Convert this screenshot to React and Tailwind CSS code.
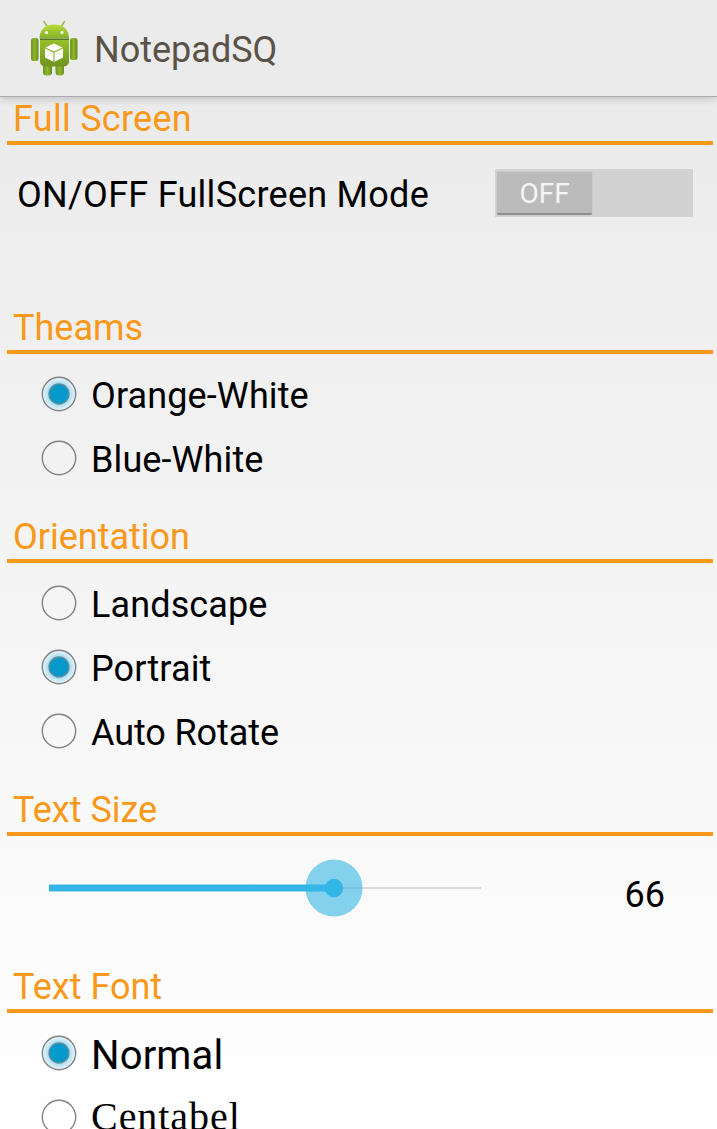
import React from "react";

function AndroidIcon() {
  return (
    <svg width="50" height="58" viewBox="0 0 50 58" className="shrink-0">
      <defs>
        <linearGradient id="head" x1="0" y1="0" x2="0" y2="1">
          <stop offset="0" stopColor="#b6dc3c" />
          <stop offset="1" stopColor="#85ae28" />
        </linearGradient>
        <linearGradient id="body" x1="0" y1="0" x2="0" y2="1">
          <stop offset="0" stopColor="#98c02c" />
          <stop offset="1" stopColor="#6e9420" />
        </linearGradient>
        <linearGradient id="limb" x1="0" y1="0" x2="1" y2="0">
          <stop offset="0" stopColor="#6d9320" />
          <stop offset="0.5" stopColor="#8fb72b" />
          <stop offset="1" stopColor="#668a1d" />
        </linearGradient>
      </defs>
      <path d="M15 2.500l3.500 5.500M35.500 2.500l-3.500 5.500" stroke="#98bd45" strokeWidth="1.500" strokeLinecap="round" />
      <rect x="14" y="44" width="9" height="12.500" rx="3.500" fill="url(#limb)" />
      <rect x="26.500" y="44" width="8.500" height="12.500" rx="3.500" fill="url(#limb)" />
      <rect x="2" y="19" width="7.500" height="23" rx="2.500" fill="url(#limb)" />
      <rect x="41" y="19" width="7.500" height="22" rx="2.500" fill="url(#limb)" />
      <path d="M11 21h29v21.500a5 5 0 0 1-5 5H16a5 5 0 0 1-5-5z" fill="url(#body)" />
      <path d="M10.500 19.500C10.500 10 17 5.500 25.500 5.500S40 10 40 19.500z" fill="url(#head)" />
      <path d="M11 20.300h29" stroke="#4f6c1a" strokeWidth="1.300" />
      <circle cx="17.500" cy="13.500" r="1.500" fill="#fff" />
      <circle cx="33" cy="13.500" r="1.500" fill="#fff" />
      <path d="M25 24.500l8.500 4-8.500 4-8.500-4z" fill="#fff" />
      <path d="M16 29.600l8.500 4v9.200L16 38.600zM34 29.600l-8.500 4v9.200l8.500-4.200z" fill="#fff" />
    </svg>
  );
}

function SectionTitle({ children, tracking = "" }) {
  return (
    <h2
      className={`ml-[7px] mr-1 h-12 shrink-0 border-b-4 border-[#f99819] pl-[6px] text-[36px] leading-[44px] font-normal whitespace-nowrap text-[#f99819] ${tracking}`}
    >
      {children}
    </h2>
  );
}

function Radio({ checked, label, textClass = "mt-[3px] text-[36px]" }) {
  return (
    <label className="flex h-16 shrink-0 items-center pl-[41px]">
      <svg width="36" height="36" viewBox="0 0 36 36" className="shrink-0">
        <defs>
          <radialGradient id="glow">
            <stop offset="0.62" stopColor="#a9dcf0" />
            <stop offset="0.95" stopColor="#e4f2f8" />
          </radialGradient>
        </defs>
        <circle cx="18" cy="18" r="16.700" fill={checked ? "url(#glow)" : "none"} stroke="#828282" strokeWidth="1.400" />
        {checked && <circle cx="18" cy="18" r="10" fill="#0699cc" stroke="#5f8c9c" strokeWidth="1.300" />}
      </svg>
      <span className={`ml-[14px] whitespace-nowrap text-black ${textClass}`}>{label}</span>
    </label>
  );
}

export default function App() {
  return (
    <div className="flex h-[1129px] w-[717px] flex-col overflow-hidden bg-linear-to-b from-[#e9e9e9] to-white font-['Roboto',sans-serif]">
      <header className="flex h-[97px] shrink-0 items-center border-b border-[#ababab] bg-[#ebebeb] pl-[29px] shadow-[0_1px_8px_rgba(0,0,0,0.22)]">
        <AndroidIcon />
        <h1 className="mt-1 ml-[15px] text-[36px] leading-[44px] font-normal text-[#5a5247]">NotepadSQ</h1>
      </header>

      <SectionTitle tracking="tracking-[0.28px]">Full Screen</SectionTitle>
      <div className="flex h-[161px] shrink-0 items-start justify-between pt-6 pr-6 pl-[17px]">
        <span className="mt-1 text-[36px] leading-[44px] tracking-[0.27px] text-black">ON/OFF FullScreen Mode</span>
        <div className="flex h-12 w-[198px] bg-[#d2d2d2] px-[2px] py-[3px]">
          <div className="flex h-[43px] w-[95px] items-center justify-center rounded-[2px] border-b-2 border-[#8f8f8f] bg-[#bbbbbb] pt-[3px] text-[28px] text-[#f5f5f5] shadow-[0_0_1px_#999]">
            OFF
          </div>
        </div>
      </div>

      <SectionTitle>Theams</SectionTitle>
      <div className="shrink-0 pt-2 pb-[25px]">
        <Radio checked label="Orange-White" textClass="mt-[3px] text-[36px] tracking-[0.12px]" />
        <Radio label="Blue-White" textClass="mt-[3px] text-[36px] tracking-[0.1px]" />
      </div>

      <SectionTitle>Orientation</SectionTitle>
      <div className="shrink-0 pt-2 pb-[25px]">
        <Radio label="Landscape" textClass="mt-[3px] text-[36px] tracking-[0.12px]" />
        <Radio checked label="Portrait" textClass="mt-[3px] text-[36px] tracking-[0.12px]" />
        <Radio label="Auto Rotate" textClass="mt-[3px] text-[36px] tracking-[-0.1px]" />
      </div>

      <SectionTitle>Text Size</SectionTitle>
      <div className="flex h-[129px] shrink-0 items-start justify-between pt-[23px] pr-[52px] pl-[49px]">
        <svg width="432" height="58" viewBox="0 0 432 58">
          <path d="M285 29h147" stroke="#dadada" strokeWidth="2" />
          <path d="M0 29h285" stroke="#33b5e5" strokeWidth="7" />
          <circle cx="285" cy="29" r="28.500" fill="#33b5e5" fillOpacity="0.600" />
          <circle cx="285" cy="29" r="9.200" fill="#33b5e5" />
        </svg>
        <span className="mt-[14px] text-[36px] leading-[44px] text-black">66</span>
      </div>

      <SectionTitle>Text Font</SectionTitle>
      <div className="shrink-0 pt-2">
        <Radio checked label="Normal" textClass="mt-[5px] text-[40px] tracking-[0.15px]" />
        <Radio label="Centabel" textClass="-mt-[1px] text-[40px] tracking-[0.95px] font-['Liberation_Serif',serif]" />
      </div>
    </div>
  );
}
